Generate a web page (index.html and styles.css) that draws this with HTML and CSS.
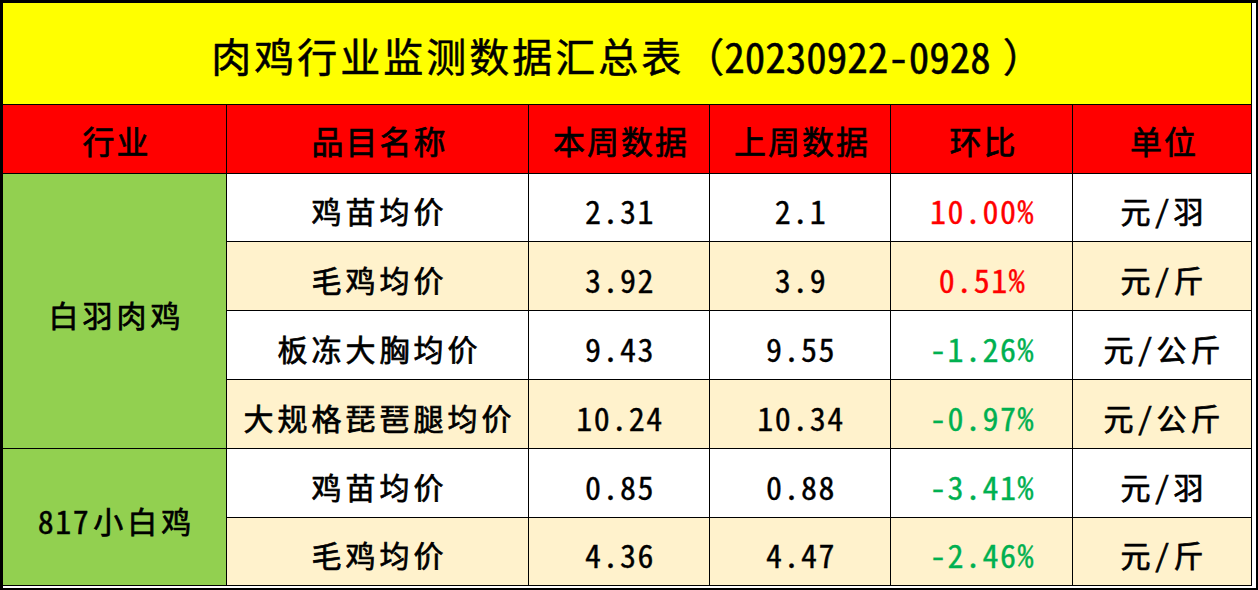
FILE: index.html
```html
<!DOCTYPE html>
<html lang="zh-CN">
<head>
<meta charset="utf-8">
<title>肉鸡行业监测数据汇总表</title>
<link rel="stylesheet" href="styles.css">
</head>
<body>
<div class="frame">
  <div class="sheet">
    <div class="cell title">肉鸡行业监测数据汇总表<span class="paren">（</span><span class="latin">20230922-0928</span><span class="paren close">）</span></div>

    <div class="cell head">行业</div>
    <div class="cell head">品目名称</div>
    <div class="cell head">本周数据</div>
    <div class="cell head">上周数据</div>
    <div class="cell head">环比</div>
    <div class="cell head">单位</div>

    <div class="cell group group-a">白羽肉鸡</div>
    <div class="cell">鸡苗均价</div>
    <div class="cell num">2.31</div>
    <div class="cell num">2.1</div>
    <div class="cell num up">10.00%</div>
    <div class="cell">元/羽</div>

    <div class="cell alt">毛鸡均价</div>
    <div class="cell alt num">3.92</div>
    <div class="cell alt num">3.9</div>
    <div class="cell alt num up">0.51%</div>
    <div class="cell alt">元/斤</div>

    <div class="cell">板冻大胸均价</div>
    <div class="cell num">9.43</div>
    <div class="cell num">9.55</div>
    <div class="cell num down">-1.26%</div>
    <div class="cell">元/公斤</div>

    <div class="cell alt">大规格琵琶腿均价</div>
    <div class="cell alt num">10.24</div>
    <div class="cell alt num">10.34</div>
    <div class="cell alt num down">-0.97%</div>
    <div class="cell alt">元/公斤</div>

    <div class="cell group group-b"><span class="digits">817</span>小白鸡</div>
    <div class="cell">鸡苗均价</div>
    <div class="cell num">0.85</div>
    <div class="cell num">0.88</div>
    <div class="cell num down">-3.41%</div>
    <div class="cell">元/羽</div>

    <div class="cell alt">毛鸡均价</div>
    <div class="cell alt num">4.36</div>
    <div class="cell alt num">4.47</div>
    <div class="cell alt num down">-2.46%</div>
    <div class="cell alt">元/斤</div>
  </div>
</div>
</body>
</html>
```

FILE: styles.css
```css
html, body {
  margin: 0;
  padding: 0;
  background: #ffffff;
}

body {
  font-family: "Noto Sans CJK SC", "Noto Sans", sans-serif;
  color: #000000;
}

.frame {
  width: 1258px;
  height: 590px;
  box-sizing: border-box;
  background: #ffffff;
  border-top: 3px solid #000000;
  border-left: 3px solid #000000;
  border-right: 2px solid #000000;
  border-bottom: 2px solid #000000;
  padding: 0 4px 2px 0;
}

.sheet {
  display: grid;
  grid-template-columns: 223px 301px 180px 180px 181px 178px;
  grid-template-rows: 101px 68px 67px 68px 68px 68px 68px 67px;
  gap: 1px;
  padding: 0 1px 1px 0;
  background: #000000;
  width: max-content;
}

.cell {
  display: flex;
  align-items: center;
  justify-content: center;
  background: #ffffff;
  font-size: 30px;
  font-weight: 400;
  letter-spacing: 4px;
  padding-left: 4px;
  padding-top: 5px;
  box-sizing: border-box;
  white-space: nowrap;
  text-spacing-trim: space-all;
  font-feature-settings: "hwid" 1;
  -webkit-text-stroke: 0.7px currentColor;
}

.num {
  font-size: 32px;
  letter-spacing: 1.5px;
  padding-left: 2px;
  -webkit-text-stroke: 0.35px currentColor;
}

.digits {
  font-size: 32px;
  letter-spacing: 1.5px;
  margin-right: 3px;
  -webkit-text-stroke: 0.4px currentColor;
}

.title {
  grid-column: 1 / -1;
  background: #ffff00;
  font-size: 40px;
  letter-spacing: 3px;
  padding: 2px 0 0 0;
  -webkit-text-stroke: 0.5px currentColor;
}

.title .paren {
  letter-spacing: 0;
  font-feature-settings: normal;
}

.title .close {
  margin-left: 12px;
}

.title .latin {
  font-size: 41px;
  letter-spacing: 0;
}

.head {
  background: #ff0000;
  font-size: 32px;
  letter-spacing: 2px;
  padding-top: 2px;
}

.alt {
  background: #fff2cc;
}

.group {
  background: #92d050;
}

.group-a {
  grid-row: 3 / span 4;
}

.group-b {
  grid-row: 7 / span 2;
}

.up {
  color: #ff0000;
}

.down {
  color: #00b050;
}
```
